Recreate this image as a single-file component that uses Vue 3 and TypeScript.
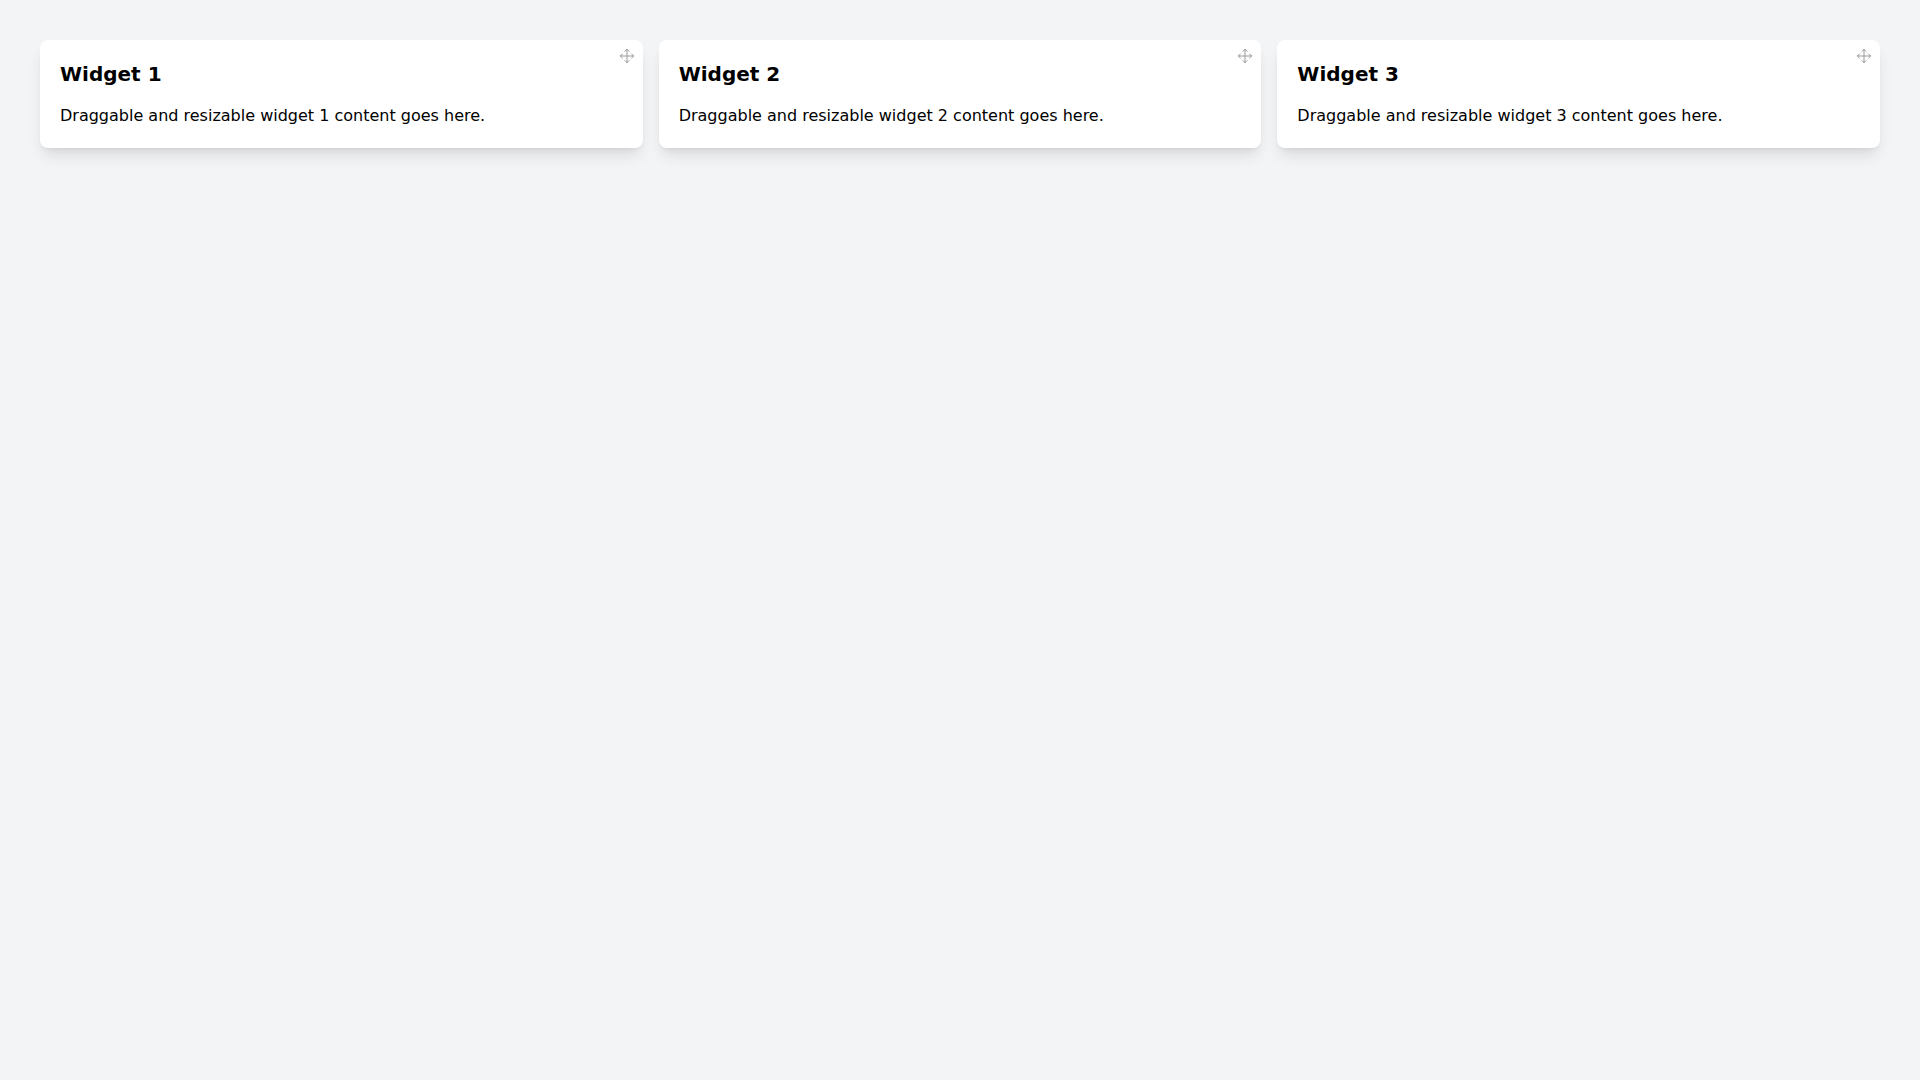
<script setup lang="ts">
const widgets = [1, 2, 3];
</script>
<template>
    <div class="page">
        <div v-for="n in widgets" :key="n" class="widget">
            <svg class="handle" viewBox="0 0 24 24" width="16" height="16" fill="none" stroke="currentColor" stroke-width="1.5" stroke-linecap="round" stroke-linejoin="round">
                <polyline points="5 9 2 12 5 15" />
                <polyline points="9 5 12 2 15 5" />
                <polyline points="15 19 12 22 9 19" />
                <polyline points="19 9 22 12 19 15" />
                <line x1="2" y1="12" x2="22" y2="12" />
                <line x1="12" y1="2" x2="12" y2="22" />
            </svg>
            <h2 class="title">Widget {{ n }}</h2>
            <p class="text">Draggable and resizable widget {{ n }} content goes here.</p>
        </div>
    </div>
</template>
<style scoped>
.page {
    display: grid;
    grid-template-columns: repeat(3, 1fr);
    gap: 16px;
    align-items: start;
    box-sizing: border-box;
    min-height: 100vh;
    padding: 40px;
    background: #f3f4f6;
    font-family: "DejaVu Sans", sans-serif;
}

.widget {
    position: relative;
    padding: 20px;
    background: #fff;
    border-radius: 8px;
    box-shadow: 0 10px 15px -3px rgba(0, 0, 0, 0.1), 0 4px 6px -4px rgba(0, 0, 0, 0.1);
}

.handle {
    position: absolute;
    top: 8px;
    right: 8px;
    color: #999;
}

.title {
    margin: 0 0 16px;
    font-size: 20px;
    line-height: 28px;
    font-weight: 700;
}

.text {
    margin: 0;
    font-size: 16px;
    line-height: 24px;
}
</style>
<style>
body {
    margin: 0;
}
</style>
